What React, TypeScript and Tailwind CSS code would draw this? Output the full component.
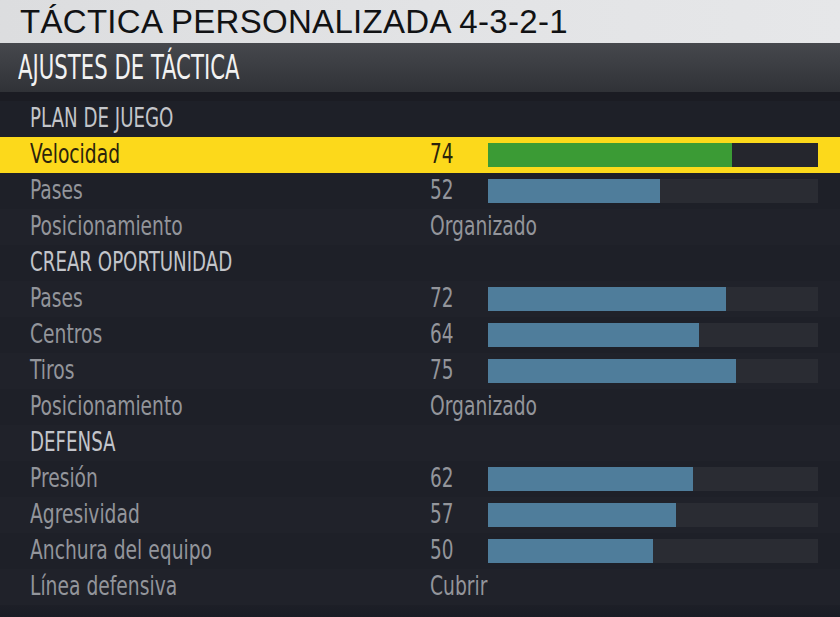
type Row =
  | { kind: 'section'; label: string }
  | { kind: 'bar'; label: string; value: number; active?: boolean }
  | { kind: 'text'; label: string; value: string };

const rows: Row[] = [
  { kind: 'section', label: 'PLAN DE JUEGO' },
  { kind: 'bar', label: 'Velocidad', value: 74, active: true },
  { kind: 'bar', label: 'Pases', value: 52 },
  { kind: 'text', label: 'Posicionamiento', value: 'Organizado' },
  { kind: 'section', label: 'CREAR OPORTUNIDAD' },
  { kind: 'bar', label: 'Pases', value: 72 },
  { kind: 'bar', label: 'Centros', value: 64 },
  { kind: 'bar', label: 'Tiros', value: 75 },
  { kind: 'text', label: 'Posicionamiento', value: 'Organizado' },
  { kind: 'section', label: 'DEFENSA' },
  { kind: 'bar', label: 'Presión', value: 62 },
  { kind: 'bar', label: 'Agresividad', value: 57 },
  { kind: 'bar', label: 'Anchura del equipo', value: 50 },
  { kind: 'text', label: 'Línea defensiva', value: 'Cubrir' },
];

// DIN-like condensed face: DejaVu Sans Condensed squeezed a bit more
const narrow = "font-['DejaVu_Sans_Condensed','DejaVu_Sans',sans-serif]";

function SettingRow({ row, index }: { row: Row; index: number }) {
  const active = row.kind === 'bar' && row.active;
  const stripe = index % 2 === 0 ? 'bg-[#1e2028]' : 'bg-[#20222a]';
  const textColor = active ? 'text-[#2a230c]' : 'text-[#93959b]';

  return (
    <div className={`flex h-9 items-start pl-[30px] text-[27px] leading-[33px] whitespace-nowrap ${narrow} ${active ? 'bg-[#fcd91b]' : stripe}`}>
      {row.kind === 'section' ? (
        <span className="origin-left scale-x-[0.75] text-[#c3c5ca]">{row.label}</span>
      ) : (
        <>
          <div className="w-[400px]">
            <span className={`block origin-left scale-x-[0.77] ${textColor}`}>{row.label}</span>
          </div>
          {row.kind === 'bar' ? (
            <>
              <div className="w-[58px]">
                <span className={`block origin-left scale-x-[0.76] ${textColor}`}>{row.value}</span>
              </div>
              <div className={`mt-[6px] h-[24px] w-[330px] ${active ? 'bg-[#25262d]' : 'bg-[#2a2c33]'}`}>
                <div
                  className={`h-full ${active ? 'bg-[#3b9b35]' : 'bg-[#4f7d9b]'}`}
                  style={{ width: `${row.value}%` }}
                />
              </div>
            </>
          ) : (
            <span className="block origin-left scale-x-[0.77] text-[#93959b]">{row.value}</span>
          )}
        </>
      )}
    </div>
  );
}

export default function App() {
  return (
    <div className="w-[840px] h-[617px] overflow-hidden bg-[#1e2028] flex flex-col">
      {/* Title band */}
      <div className="h-[43px] bg-gradient-to-r from-[#dcdddf] via-[#e2e3e5] to-[#e6e7e9] pl-5 font-['Liberation_Sans',Arial,sans-serif] text-[33px] leading-[43px] tracking-[0.3px] text-[#111214] whitespace-nowrap">
        TÁCTICA PERSONALIZADA 4-3-2-1
      </div>

      {/* Subheader */}
      <div className="h-[49px] bg-gradient-to-b from-[#46484d] to-[#303237] pl-[18px]">
        <div className={`origin-left scale-x-[0.715] text-[33px] leading-[49px] text-[#f2f2f2] whitespace-nowrap ${narrow}`}>
          AJUSTES DE TÁCTICA
        </div>
      </div>

      <div className="h-[9px] bg-[#1b1c23]" />

      <div className="flex flex-col">
        {rows.map((row, i) => (
          <SettingRow key={i} row={row} index={i} />
        ))}
      </div>

      <div className="flex-1 bg-gradient-to-b from-[#1d1f27] to-[#191c25]" />
    </div>
  );
}
